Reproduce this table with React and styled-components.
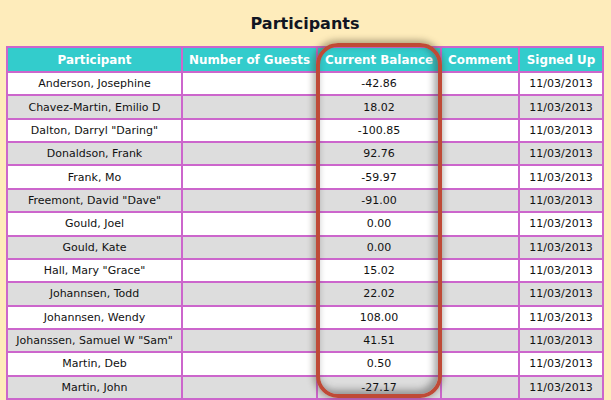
import React from "react";
import styled, { createGlobalStyle } from "styled-components";

const Global = createGlobalStyle`
  html, body { margin: 0; padding: 0; background: #feecbb; }
  body { font-family: "DejaVu Sans", Verdana, sans-serif; }
`;

const Page = styled.div`
  width: 611px;
  height: 400px;
  overflow: hidden;
  box-sizing: border-box;
  padding: 14px 0 0 6px;
`;

const Title = styled.h2`
  margin: 0;
  width: 598px;
  height: 32px;
  text-align: center;
  font-size: 16px;
  font-weight: bold;
  color: #111522;
  line-height: 20px;
`;

const TableWrap = styled.div`
  position: relative;
  width: 598px;
`;

const Grid = styled.div`
  display: grid;
  grid-template-columns: 173px 133px 122px 76px 82px;
  grid-template-rows: 23px;
  grid-auto-rows: 21.36px;
  gap: 2px;
  padding: 2px;
  background: #cc66cc;
`;

const Head = styled.div`
  background: #33cccc;
  color: #ffffff;
  font-weight: bold;
  font-size: 11.9px;
  display: flex;
  align-items: center;
  justify-content: center;
  white-space: nowrap;
`;

const Cell = styled.div`
  background: ${(p) => (p.$alt ? "#dddddd" : "#ffffff")};
  color: #111;
  font-size: 11px;
  display: flex;
  align-items: center;
  justify-content: center;
  white-space: nowrap;
`;

const Highlight = styled.div`
  position: absolute;
  left: 310px;
  top: -3px;
  width: 126px;
  height: 355px;
  box-sizing: border-box;
  border: 4px solid #bf4a36;
  border-radius: 22px;
  box-shadow: -1px -1px 6px 2px rgba(70, 60, 40, 0.4), inset -3px -3px 7px 1px rgba(60, 60, 60, 0.45);
  pointer-events: none;
`;

const rows = [
  ["Anderson, Josephine", "-42.86"],
  ["Chavez-Martin, Emilio D", "18.02"],
  ['Dalton, Darryl "Daring"', "-100.85"],
  ["Donaldson, Frank", "92.76"],
  ["Frank, Mo", "-59.97"],
  ['Freemont, David "Dave"', "-91.00"],
  ["Gould, Joel", "0.00"],
  ["Gould, Kate", "0.00"],
  ['Hall, Mary "Grace"', "15.02"],
  ["Johannsen, Todd", "22.02"],
  ["Johannsen, Wendy", "108.00"],
  ['Johanssen, Samuel W "Sam"', "41.51"],
  ["Martin, Deb", "0.50"],
  ["Martin, John", "-27.17"],
];

const headers = ["Participant", "Number of Guests", "Current Balance", "Comment", "Signed Up"];

export default function App() {
  return (
    <>
      <Global />
      <Page>
        <Title>Participants</Title>
        <TableWrap>
          <Grid>
            {headers.map((h) => (
              <Head key={h}>{h}</Head>
            ))}
            {rows.map(([name, bal], i) => {
              const alt = i % 2 === 1;
              return (
                <React.Fragment key={name}>
                  <Cell $alt={alt}>{name}</Cell>
                  <Cell $alt={alt}></Cell>
                  <Cell $alt={alt}>{bal}</Cell>
                  <Cell $alt={alt}></Cell>
                  <Cell $alt={alt}>11/03/2013</Cell>
                </React.Fragment>
              );
            })}
          </Grid>
          <Highlight />
        </TableWrap>
      </Page>
    </>
  );
}
